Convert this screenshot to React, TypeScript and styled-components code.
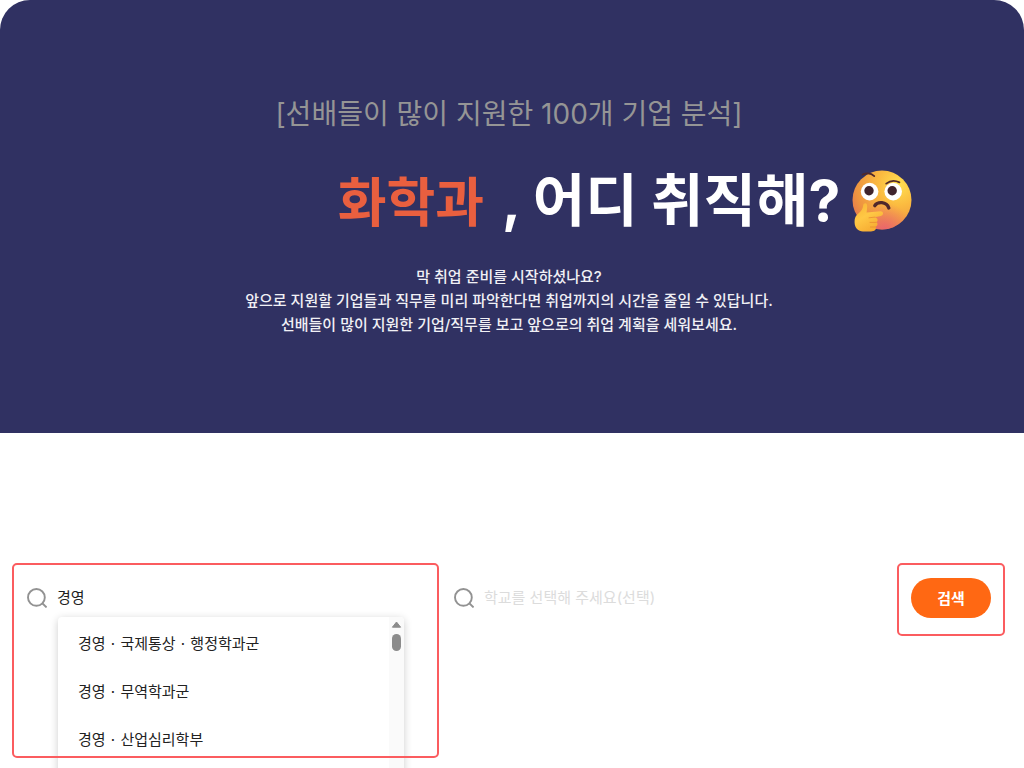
import React, { Fragment, useState } from "react";
import styled, { createGlobalStyle } from "styled-components";

const GlobalStyle = createGlobalStyle`
  *, *::before, *::after { box-sizing: border-box; }
  body {
    margin: 0;
    background: #fff;
    color: #222;
    font-family: Inter, "Noto Sans CJK KR", sans-serif;
    font-size: 15px;
  }
`;

const Page = styled.main`
  min-height: 100vh;
  overflow: hidden;
`;

const Hero = styled.header`
  display: flex;
  flex-direction: column;
  align-items: center;
  padding: 94px 6px 96px 0;
  border-radius: 30px 30px 0 0;
  background: #303162;
  text-align: center;
`;

const Kicker = styled.p`
  margin: 0;
  color: #959595;
  font-size: 28px;
  line-height: 40px;
`;

const Title = styled.h1`
  display: flex;
  align-items: center;
  margin: 31px 0 28px;
  padding-left: 232px;
  color: #fff;
  font-size: 57px;
  font-weight: 700;
  line-height: 72px;
  white-space: nowrap;

  svg {
    margin-left: 12px;
  }
`;

const Major = styled.span`
  margin-right: 18px;
  padding-top: 4px;
  color: #e95f3f;
  font-size: 53px;
  line-height: 68px;
`;

const Lead = styled.p`
  margin: 0;
  color: #f0f0f5;
  font-weight: 500;
  line-height: 24px;
`;

const SearchForm = styled.form`
  display: grid;
  grid-template-columns: 427fr 458fr 108px;
  align-items: start;
  margin-top: 130px;
  padding: 0 19px 0 12px;
`;

const Cell = styled.div<{ $outlined?: boolean; $height: number }>`
  position: relative;
  min-height: ${(p) => p.$height}px;
  padding: 15px 14px;

  &::after {
    content: "";
    display: ${(p) => (p.$outlined ? "block" : "none")};
    position: absolute;
    inset: 0;
    border: 2px solid #fb5c5f;
    border-radius: 5px;
    pointer-events: none;
  }
`;

const Field = styled.label`
  display: flex;
  align-items: center;
  gap: 10px;
  height: 40px;
`;

const TextInput = styled.input`
  flex: 1;
  min-width: 0;
  padding: 0;
  border: 0;
  outline: 0;
  background: transparent;
  color: #222;
  font: inherit;
  line-height: 24px;

  &::placeholder {
    color: #dcdcdc;
    opacity: 1;
  }
`;

const Suggestions = styled.div`
  position: absolute;
  top: 54px;
  left: 46px;
  right: 35px;
  display: flex;
  height: 240px;
  border-radius: 4px;
  background: #fff;
  box-shadow: 0 2px 8px rgba(0, 0, 0, 0.2);
`;

const Options = styled.ul`
  flex: 1;
  margin: 0;
  padding: 3px 0 0 20px;
  list-style: none;
`;

const Option = styled.li`
  line-height: 48px;
`;

const Dot = styled.span`
  margin: 0 1px;
`;

const ScrollTrack = styled.div`
  display: flex;
  flex-direction: column;
  align-items: center;
  gap: 6px;
  width: 15px;
  padding-top: 4px;
  border-radius: 0 4px 4px 0;
  background: #fafafa;
`;

const ScrollThumb = styled.span`
  width: 9px;
  height: 17px;
  border-radius: 5px;
  background: #8b8b8b;
`;

const SubmitButton = styled.button`
  display: block;
  width: 80px;
  height: 40px;
  margin: 0 auto;
  padding: 0 0 2px;
  border: 0;
  border-radius: 20px;
  background: #ff6813;
  color: #fff;
  font: inherit;
  font-weight: 700;
  cursor: pointer;
`;

const SearchIcon = () => (
  <svg width="21" height="20" viewBox="0 0 21 20" fill="none" stroke="#929292" strokeWidth="1.9" aria-hidden="true">
    <circle cx="10.4" cy="9.4" r="8.4" />
    <path d="M16 15L20.6 19.4" />
  </svg>
);

const ThinkingFace = () => (
  <svg width="60" height="62" viewBox="0 0 60 62" role="img" aria-label="생각하는 얼굴">
    <defs>
      <radialGradient id="face" cx="0.78" cy="0.25" r="0.85">
        <stop offset="0" stopColor="#ffe052" />
        <stop offset="0.4" stopColor="#fbbb40" />
        <stop offset="0.85" stopColor="#ee9440" />
        <stop offset="1" stopColor="#e8804a" />
      </radialGradient>
      <radialGradient id="blush" cx="0.55" cy="1" r="0.45">
        <stop offset="0" stopColor="#ea5f74" stopOpacity="0.85" />
        <stop offset="1" stopColor="#ea5f74" stopOpacity="0" />
      </radialGradient>
      <linearGradient id="hand" x1="0" y1="0" x2="0.6" y2="1">
        <stop offset="0" stopColor="#f8b335" />
        <stop offset="0.5" stopColor="#ffc845" />
        <stop offset="1" stopColor="#f6ab32" />
      </linearGradient>
    </defs>
    <circle cx="30" cy="30" r="29.5" fill="url(#face)" />
    <circle cx="30" cy="30" r="29.5" fill="url(#blush)" />
    <circle cx="17.6" cy="21.6" r="8.8" fill="#fff" />
    <circle cx="41.2" cy="21.6" r="8.8" fill="#fff" />
    <circle cx="17" cy="20.8" r="4.7" fill="#40242c" />
    <circle cx="40.2" cy="20.8" r="4.7" fill="#40242c" />
    <g fill="none" stroke="#50282b" strokeLinecap="round">
      <path d="M10.5 4.6C15 2.8 19.5 3.2 22.3 6.2" strokeWidth="1.7" />
      <path d="M34.2 13.6C37.8 10.8 43 10.2 47.4 12.4" strokeWidth="1.8" />
      <path d="M22.8 35.6C25.5 31.4 34.5 31.2 36.8 38" strokeWidth="3.4" />
    </g>
    <path
      d="M11.2 35.3C11.4 32.9 14.7 32.5 15.1 35.2C15.4 37.6 14.8 40 14.6 42.4L28.4 41.3C32 41.2 31.7 45.4 28.8 46L22.4 47.2C26.4 47.8 26.2 51.2 24.4 52.1C26.3 53.8 25.6 55.8 23.7 56.8C24.8 59.4 22.5 61.5 19 61.5H11C6.2 61.5 2.7 58 2.6 52.8C2.5 47.2 3.8 45.6 7.2 42.7C10 40.2 10.8 38.7 11.2 35.3Z"
      fill="url(#hand)"
    />
    <path d="M17 47.8L23 47.1M18 52.4H24.2M18.4 57H23.6" fill="none" stroke="#e98b31" strokeWidth="0.8" strokeLinecap="round" />
  </svg>
);

const majors = [["경영", "국제통상", "행정학과군"], ["경영", "무역학과군"], ["경영", "산업심리학부"]];

export default function App() {
  const [major, setMajor] = useState("경영");
  const [school, setSchool] = useState("");

  return (
    <Page>
      <GlobalStyle />
      <Hero>
        <Kicker>[선배들이 많이 지원한 100개 기업 분석]</Kicker>
        <Title>
          <Major>화학과</Major>, 어디 취직해?
          <ThinkingFace />
        </Title>
        <Lead>
          막 취업 준비를 시작하셨나요?
          <br />
          앞으로 지원할 기업들과 직무를 미리 파악한다면 취업까지의 시간을 줄일 수 있답니다.
          <br />
          선배들이 많이 지원한 기업/직무를 보고 앞으로의 취업 계획을 세워보세요.
        </Lead>
      </Hero>

      <SearchForm onSubmit={(e) => e.preventDefault()}>
        <Cell $outlined $height={195}>
          <Field>
            <SearchIcon />
            <TextInput aria-label="학과" value={major} onChange={(e) => setMajor(e.target.value)} />
          </Field>
          <Suggestions>
            <Options>
              {majors.map((parts) => (
                <Option key={parts.join()}>
                  {parts.map((part, i) => (
                    <Fragment key={part}>
                      {i > 0 && <Dot> · </Dot>}
                      {part}
                    </Fragment>
                  ))}
                </Option>
              ))}
            </Options>
            <ScrollTrack>
              <svg width="11" height="7" viewBox="0 0 11 7" aria-hidden="true">
                <path d="M5.5 1L9.6 6.2H1.4Z" fill="#8b8b8b" stroke="#8b8b8b" strokeLinejoin="round" />
              </svg>
              <ScrollThumb />
            </ScrollTrack>
          </Suggestions>
        </Cell>
        <Cell $height={72}>
          <Field>
            <SearchIcon />
            <TextInput
              aria-label="학교"
              placeholder="학교를 선택해 주세요(선택)"
              value={school}
              onChange={(e) => setSchool(e.target.value)}
            />
          </Field>
        </Cell>
        <Cell $outlined $height={73}>
          <SubmitButton type="submit">검색</SubmitButton>
        </Cell>
      </SearchForm>
    </Page>
  );
}
